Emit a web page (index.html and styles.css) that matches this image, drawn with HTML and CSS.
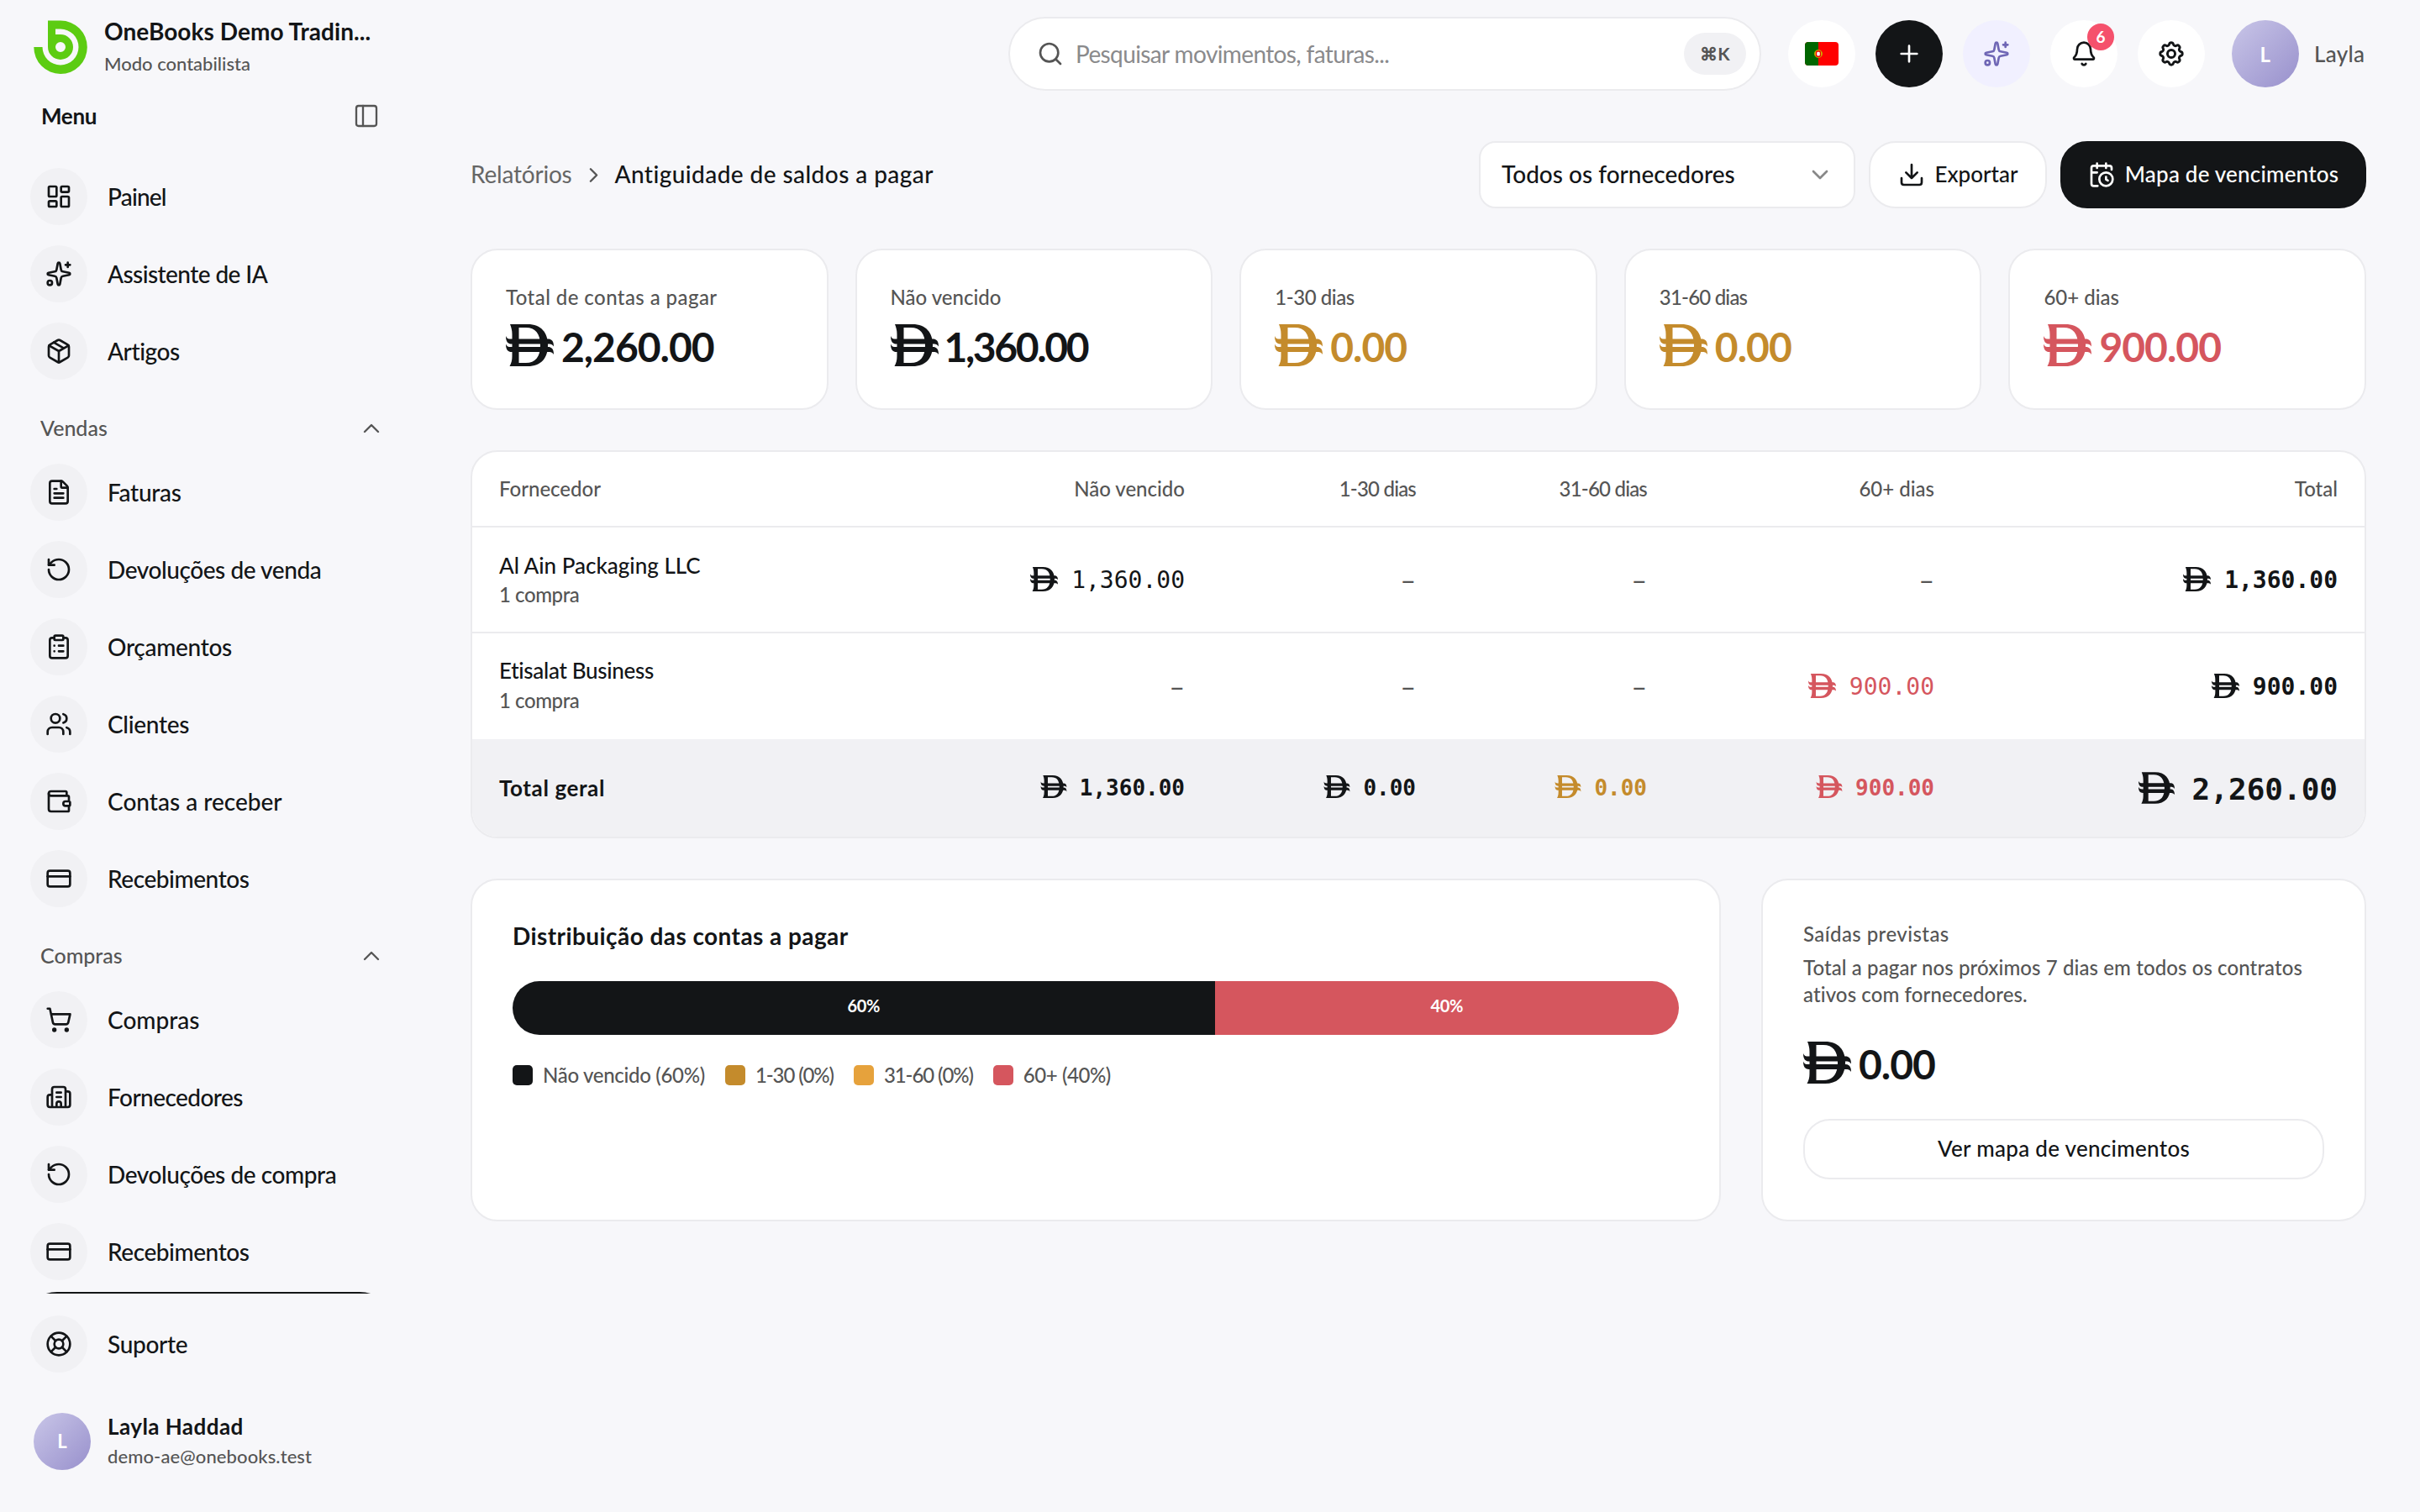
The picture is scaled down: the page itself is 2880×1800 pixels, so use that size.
FILE: index.html
```html
<!DOCTYPE html>
<html lang="pt">
<head>
<meta charset="utf-8">
<title>Antiguidade de saldos a pagar</title>
<link rel="stylesheet" href="styles.css">
</head>
<body>
<svg class="defs" aria-hidden="true">
  <symbol id="dashboard" viewBox="0 0 24 24"><rect x="3" y="3" width="7" height="9" rx="1"/><rect x="14" y="3" width="7" height="5" rx="1"/><rect x="14" y="12" width="7" height="9" rx="1"/><rect x="3" y="16" width="7" height="5" rx="1"/></symbol>
  <symbol id="sparkles" viewBox="0 0 24 24"><path d="M11.017 2.814a1 1 0 0 1 1.966 0l1.051 5.558a2 2 0 0 0 1.594 1.594l5.558 1.051a1 1 0 0 1 0 1.966l-5.558 1.051a2 2 0 0 0-1.594 1.594l-1.051 5.558a1 1 0 0 1-1.966 0l-1.051-5.558a2 2 0 0 0-1.594-1.594l-5.558-1.051a1 1 0 0 1 0-1.966l5.558-1.051a2 2 0 0 0 1.594-1.594z"/><path d="M20 2v4M22 4h-4"/><circle cx="4" cy="20" r="2"/></symbol>
  <symbol id="package" viewBox="0 0 24 24"><path d="M11 21.73a2 2 0 0 0 2 0l7-4A2 2 0 0 0 21 16V8a2 2 0 0 0-1-1.730l-7-4a2 2 0 0 0-2 0l-7 4A2 2 0 0 0 3 8v8a2 2 0 0 0 1 1.730z"/><path d="M12 22V12M3.290 7 12 12l8.710-5M7.500 4.270l9 5.150"/></symbol>
  <symbol id="file" viewBox="0 0 24 24"><path d="M6 22a2 2 0 0 1-2-2V4a2 2 0 0 1 2-2h8a2.400 2.400 0 0 1 1.704.706l3.588 3.588A2.400 2.400 0 0 1 20 8v12a2 2 0 0 1-2 2z"/><path d="M14 2v5a1 1 0 0 0 1 1h5M10 9H8M16 13H8M16 17H8"/></symbol>
  <symbol id="undo" viewBox="0 0 24 24"><path d="M3 12a9 9 0 1 0 9-9 9.750 9.750 0 0 0-6.740 2.740L3 8"/><path d="M3 3v5h5"/></symbol>
  <symbol id="clipboard" viewBox="0 0 24 24"><rect x="8" y="2" width="8" height="4" rx="1"/><path d="M16 4h2a2 2 0 0 1 2 2v14a2 2 0 0 1-2 2H6a2 2 0 0 1-2-2V6a2 2 0 0 1 2-2h2M12 11h4M12 16h4M8 11h.01M8 16h.01"/></symbol>
  <symbol id="users" viewBox="0 0 24 24"><path d="M16 21v-2a4 4 0 0 0-4-4H6a4 4 0 0 0-4 4v2M16 3.128a4 4 0 0 1 0 7.744M22 21v-2a4 4 0 0 0-3-3.870"/><circle cx="9" cy="7" r="4"/></symbol>
  <symbol id="wallet" viewBox="0 0 24 24"><path d="M19 7V4a1 1 0 0 0-1-1H5a2 2 0 0 0 0 4h15a1 1 0 0 1 1 1v4h-3a2 2 0 0 0 0 4h3a1 1 0 0 0 1-1v-2a1 1 0 0 0-1-1"/><path d="M3 5v14a2 2 0 0 0 2 2h15a1 1 0 0 0 1-1v-4"/></symbol>
  <symbol id="credit" viewBox="0 0 24 24"><rect x="2" y="5" width="20" height="14" rx="2"/><path d="M2 10h20"/></symbol>
  <symbol id="cart" viewBox="0 0 24 24"><circle cx="8" cy="21" r="1"/><circle cx="19" cy="21" r="1"/><path d="M2.050 2.050h2l2.660 12.420a2 2 0 0 0 2 1.580h9.780a2 2 0 0 0 1.950-1.570l1.650-7.430H5.120"/></symbol>
  <symbol id="building" viewBox="0 0 24 24"><path d="M10 12h4M10 8h4M14 21v-3a2 2 0 0 0-4 0v3M6 10H4a2 2 0 0 0-2 2v7a2 2 0 0 0 2 2h16a2 2 0 0 0 2-2V9a2 2 0 0 0-2-2h-2M6 21V5a2 2 0 0 1 2-2h8a2 2 0 0 1 2 2v16"/></symbol>
  <symbol id="buoy" viewBox="0 0 24 24"><circle cx="12" cy="12" r="10"/><path d="m4.930 4.930 4.240 4.240M14.830 9.170l4.240-4.240M14.830 14.830l4.240 4.240M9.170 14.830l-4.240 4.240"/><circle cx="12" cy="12" r="4"/></symbol>
  <symbol id="panel" viewBox="0 0 24 24"><rect x="3" y="3" width="18" height="18" rx="2"/><path d="M9 3v18"/></symbol>
  <symbol id="up" viewBox="0 0 24 24"><path d="m18 15-6-6-6 6"/></symbol>
  <symbol id="down" viewBox="0 0 24 24"><path d="m6 9 6 6 6-6"/></symbol>
  <symbol id="right" viewBox="0 0 24 24"><path d="m9 18 6-6-6-6"/></symbol>
  <symbol id="search" viewBox="0 0 24 24"><path d="m21 21-4.340-4.340"/><circle cx="11" cy="11" r="8"/></symbol>
  <symbol id="plus" viewBox="0 0 24 24"><path d="M5 12h14M12 5v14"/></symbol>
  <symbol id="bell" viewBox="0 0 24 24"><path d="M10.268 21a2 2 0 0 0 3.464 0M3.262 15.326A1 1 0 0 0 4 17h16a1 1 0 0 0 .74-1.673C19.410 13.956 18 12.499 18 8A6 6 0 0 0 6 8c0 4.499-1.411 5.956-2.738 7.326"/></symbol>
  <symbol id="gear" viewBox="0 0 24 24"><g transform="translate(-1.2 -1.2) scale(1.1)"><path d="M10.325 4.317c.426-1.756 2.924-1.756 3.350 0a1.724 1.724 0 0 0 2.573 1.066c1.543-.94 3.310.826 2.370 2.370a1.724 1.724 0 0 0 1.065 2.572c1.756.426 1.756 2.924 0 3.350a1.724 1.724 0 0 0-1.066 2.573c.94 1.543-.826 3.310-2.370 2.370a1.724 1.724 0 0 0-2.572 1.065c-.426 1.756-2.924 1.756-3.350 0a1.724 1.724 0 0 0-2.573-1.066c-1.543.94-3.310-.826-2.370-2.370a1.724 1.724 0 0 0-1.065-2.572c-1.756-.426-1.756-2.924 0-3.350a1.724 1.724 0 0 0 1.066-2.573c-.94-1.543.826-3.310 2.370-2.370 1 .608 2.296.07 2.572-1.065z"/><circle cx="12" cy="12" r="3.100"/></g></symbol>
  <symbol id="download" viewBox="0 0 24 24"><path d="M12 15V3M21 15v4a2 2 0 0 1-2 2H5a2 2 0 0 1-2-2v-4M7 10l5 5 5-5"/></symbol>
  <symbol id="calendar" viewBox="0 0 24 24"><path d="M16 14v2.200l1.600 1M16 2v4M21 7.500V6a2 2 0 0 0-2-2H5a2 2 0 0 0-2 2v14a2 2 0 0 0 2 2h3.500M3 10h5M8 2v4"/><circle cx="16" cy="16" r="6"/></symbol>
  <symbol id="dirham" viewBox="0 0 57 50"><path fill-rule="evenodd" d="M5 0H26C42 0 50 10 50 25S42 50 26 50H4.500C6.500 46 7.500 43 7.500 38V12C7.500 7 6.500 4 5 0ZM15.500 4V46H24C35 46 41 39 41 25S35 4 24 4Z"/><path d="M0 14C1 17 3 17.500 6 17.500H50C54.500 17.500 57 20 57 26.500C55.500 24 53.500 23.500 50 23.500H7C2.500 23.500 0 21 0 14ZM0 23.500C1 26.500 3 27 6 27H50C54.500 27 57 29.500 57 36C55.500 33.500 53.500 33 50 33H7C2.500 33 0 30.500 0 23.500Z"/></symbol>
</svg>
<div class="app">
  <aside class="sidebar">
    <div class="brand">
      <svg class="logo" viewBox="0 0 64 64"><path fill-rule="evenodd" d="M17 .5H32A31.750 31.750 0 1 1 .3 32H10.500A21.500 21.500 0 1 0 32 10.500H26V17H32A15 15 0 1 1 17 32ZM32 26a6 6 0 1 0 0 12a6 6 0 1 0 0-12Z"/></svg>
      <div class="brand-text"><div class="brand-name">OneBooks Demo Tradin...</div><div class="brand-mode">Modo contabilista</div></div>
    </div>
    <div class="menu-head"><span class="snug">Menu</span><svg class="icon thin"><use href="#panel"/></svg></div>
    <div class="scroll">
      <nav class="group">
        <a class="item"><i class="bubble"><svg class="icon"><use href="#dashboard"/></svg></i><span class="tightest">Painel</span></a>
        <a class="item"><i class="bubble"><svg class="icon"><use href="#sparkles"/></svg></i><span class="tighter">Assistente de IA</span></a>
        <a class="item"><i class="bubble"><svg class="icon"><use href="#package"/></svg></i><span class="tight">Artigos</span></a>
      </nav>
      <div class="section"><span>Vendas</span><svg class="icon thin"><use href="#up"/></svg></div>
      <nav class="group">
        <a class="item"><i class="bubble"><svg class="icon"><use href="#file"/></svg></i><span class="snug">Faturas</span></a>
        <a class="item"><i class="bubble"><svg class="icon"><use href="#undo"/></svg></i><span class="tight">Devoluções de venda</span></a>
        <a class="item"><i class="bubble"><svg class="icon"><use href="#clipboard"/></svg></i><span class="snug">Orçamentos</span></a>
        <a class="item"><i class="bubble"><svg class="icon"><use href="#users"/></svg></i><span class="snug">Clientes</span></a>
        <a class="item"><i class="bubble"><svg class="icon"><use href="#wallet"/></svg></i><span>Contas a receber</span></a>
        <a class="item"><i class="bubble"><svg class="icon"><use href="#credit"/></svg></i><span class="tight">Recebimentos</span></a>
      </nav>
      <div class="section"><span>Compras</span><svg class="icon thin"><use href="#up"/></svg></div>
      <nav class="group">
        <a class="item"><i class="bubble"><svg class="icon"><use href="#cart"/></svg></i><span>Compras</span></a>
        <a class="item"><i class="bubble"><svg class="icon"><use href="#building"/></svg></i><span class="tighter">Fornecedores</span></a>
        <a class="item"><i class="bubble"><svg class="icon"><use href="#undo"/></svg></i><span class="tight">Devoluções de compra</span></a>
        <a class="item"><i class="bubble"><svg class="icon"><use href="#credit"/></svg></i><span class="tight">Recebimentos</span></a>
        <a class="item active"></a>
      </nav>
    </div>
    <a class="item support"><i class="bubble"><svg class="icon"><use href="#buoy"/></svg></i><span class="snug">Suporte</span></a>
    <div class="user"><div class="avatar small">L</div><div><div class="user-name">Layla Haddad</div><div class="user-mail">demo-ae@onebooks.test</div></div></div>
  </aside>
  <main class="main">
    <header class="topbar">
      <div class="search"><svg class="icon"><use href="#search"/></svg><span class="placeholder">Pesquisar movimentos, faturas...</span><span class="kbd">⌘K</span></div>
      <div class="actions">
        <div class="round"><svg class="flag" viewBox="0 0 40 28"><rect width="40" height="28" fill="#f00"/><rect width="16" height="28" fill="#060"/><circle cx="16" cy="14" r="4.600" fill="#e3c400" stroke="#b8a000" stroke-width=".8"/><rect x="13.500" y="11" width="5" height="6.200" rx="2" fill="#fff" stroke="#e00" stroke-width="1.400"/></svg></div>
        <div class="round dark"><svg class="icon"><use href="#plus"/></svg></div>
        <div class="round violet"><svg class="icon"><use href="#sparkles"/></svg></div>
        <div class="round"><svg class="icon bell"><use href="#bell"/></svg><b class="badge">6</b></div>
        <div class="round"><svg class="icon"><use href="#gear"/></svg></div>
      </div>
      <div class="profile"><div class="avatar">L</div><span>Layla</span></div>
    </header>
    <div class="toolbar">
      <div class="crumbs"><span class="crumb">Relatórios</span><svg class="icon"><use href="#right"/></svg><span class="wide">Antiguidade de saldos a pagar</span></div>
      <div class="select"><span>Todos os fornecedores</span><svg class="icon"><use href="#down"/></svg></div>
      <div class="btn"><svg class="icon"><use href="#download"/></svg><span>Exportar</span></div>
      <div class="btn primary"><svg class="icon"><use href="#calendar"/></svg><span>Mapa de vencimentos</span></div>
    </div>
    <section class="stats">
      <div class="card stat"><div class="label wide">Total de contas a pagar</div><div class="amount"><svg><use href="#dirham"/></svg><span>2,260.00</span></div></div>
      <div class="card stat"><div class="label">Não vencido</div><div class="amount condensed"><svg><use href="#dirham"/></svg><span>1,360.00</span></div></div>
      <div class="card stat"><div class="label tight">1-30 dias</div><div class="amount amber"><svg><use href="#dirham"/></svg><span>0.00</span></div></div>
      <div class="card stat"><div class="label tightest">31-60 dias</div><div class="amount amber"><svg><use href="#dirham"/></svg><span>0.00</span></div></div>
      <div class="card stat"><div class="label">60+ dias</div><div class="amount red"><svg><use href="#dirham"/></svg><span>900.00</span></div></div>
    </section>
    <section class="card table">
      <div class="row head"><div>Fornecedor</div><div>Não vencido</div><div class="tightest">1-30 dias</div><div class="tightest">31-60 dias</div><div>60+ dias</div><div>Total</div></div>
      <div class="row line">
        <div><div class="vendor">Al Ain Packaging LLC</div><div class="count tight">1 compra</div></div>
        <div><p class="money"><svg><use href="#dirham"/></svg>1,360.00</p></div><div class="dash">–</div><div class="dash">–</div><div class="dash">–</div>
        <div><p class="money bold"><svg><use href="#dirham"/></svg>1,360.00</p></div>
      </div>
      <div class="row line last">
        <div><div class="vendor snug">Etisalat Business</div><div class="count tight">1 compra</div></div>
        <div class="dash">–</div><div class="dash">–</div><div class="dash">–</div><div><p class="money red"><svg><use href="#dirham"/></svg>900.00</p></div>
        <div><p class="money bold"><svg><use href="#dirham"/></svg>900.00</p></div>
      </div>
      <div class="row foot">
        <div class="wider">Total geral</div>
        <div><p class="money sum"><svg><use href="#dirham"/></svg>1,360.00</p></div>
        <div><p class="money sum"><svg><use href="#dirham"/></svg>0.00</p></div>
        <div><p class="money sum amber"><svg><use href="#dirham"/></svg>0.00</p></div>
        <div><p class="money sum red"><svg><use href="#dirham"/></svg>900.00</p></div>
        <div><p class="money grand"><svg><use href="#dirham"/></svg>2,260.00</p></div>
      </div>
    </section>
    <section class="bottom">
      <div class="card dist">
        <h2 class="wide">Distribuição das contas a pagar</h2>
        <div class="bar"><div class="seg ink" style="width:60.2%">60%</div><div class="seg rose" style="width:39.8%">40%</div></div>
        <div class="legend"><div><i class="ink"></i><span class="snug">Não vencido (60%)</span></div><div><i class="ochre"></i><span class="squeezed">1-30 (0%)</span></div><div><i class="orange"></i><span class="squeezed">31-60 (0%)</span></div><div><i class="rose"></i><span class="tight">60+ (40%)</span></div></div>
      </div>
      <div class="card out">
        <div class="out-title wide">Saídas previstas</div>
        <div class="out-text">Total a pagar nos próximos 7 dias em todos os contratos<br>ativos com fornecedores.</div>
        <div class="amount"><svg><use href="#dirham"/></svg><span>0.00</span></div>
        <div class="ghost">Ver mapa de vencimentos</div>
      </div>
    </section>
  </main>
</div>
</body>
</html>
```
FILE: styles.css
```css
* { box-sizing: border-box; margin: 0; padding: 0; }
body { width: 2880px; height: 1800px; overflow: hidden; background: #f7f7fa; color: #131517; font-family: Lato, "Noto Sans", sans-serif; font-size: 28px; font-weight: 500; font-variant-ligatures: none; white-space: nowrap; }
.defs { position: absolute; width: 0; height: 0; }
.icon { width: 32px; height: 32px; fill: none; stroke: currentColor; stroke-width: 2; stroke-linecap: round; stroke-linejoin: round; flex: none; }
.icon.thin { stroke-width: 1.75; color: #555; }
.app { display: grid; grid-template-columns: 496px 1fr; height: 1800px; }

/* Tracking */
.wider { letter-spacing: .6px; }
.wide { letter-spacing: .43px; }
.snug { letter-spacing: -.3px; }
.tight { letter-spacing: -.43px; }
.tighter { letter-spacing: -.57px; }
.tightest { letter-spacing: -.8px; }
.squeezed { letter-spacing: -1.1px; }

/* Sidebar */
.sidebar { display: flex; flex-direction: column; padding: 18px 24px 0; }
.brand { display: flex; align-items: center; gap: 20px; height: 76px; padding-left: 16px; }
.logo { width: 64px; height: 64px; fill: #5ccc12; }
.brand-text { line-height: 38px; }
.brand-name { font-size: 28px; font-weight: 700; letter-spacing: .05px; }
.brand-mode { font-size: 22px; line-height: 40px; margin-bottom: -2px; color: #555; }
.menu-head { display: flex; justify-content: space-between; align-items: center; height: 40px; margin-top: 24px; padding: 0 20px 0 25px; font-size: 26px; font-weight: 700; }
.menu-head span { padding-bottom: 1px; }
.scroll { height: 1350px; margin-top: 32px; overflow: hidden; }
.group { display: flex; flex-direction: column; gap: 4px; }
.item { display: flex; align-items: center; gap: 24px; height: 88px; padding: 0 12px; border-radius: 44px; flex: none; }
.item.active { background: #131517; }
.bubble { display: flex; align-items: center; justify-content: center; width: 68px; height: 68px; border-radius: 50%; background: #f1f1f4; }
.section { display: flex; align-items: center; justify-content: space-between; height: 80px; padding: 16px 14px 0 24px; font-size: 25px; color: #555; }
.section span { padding-bottom: 2px; }
.support { margin-top: 16px; }
.user { display: flex; align-items: center; gap: 20px; height: 72px; margin-top: 36px; padding-left: 16px; line-height: 36px; }
.user-name { font-size: 26px; font-weight: 700; letter-spacing: .45px; }
.user-mail { font-size: 22px; letter-spacing: .1px; color: #555; }
.avatar { display: flex; align-items: center; justify-content: center; width: 80px; height: 80px; border-radius: 50%; background: linear-gradient(135deg, #c9c6e8, #9890cc); color: #fff; font-size: 24px; font-weight: 700; }
.avatar.small { width: 68px; height: 68px; font-size: 22px; }

/* Top bar */
.main { padding: 0 64px; }
.topbar { display: flex; align-items: center; justify-content: flex-end; gap: 32px; height: 128px; }
.search { display: flex; align-items: center; width: 896px; height: 88px; padding: 0 16px 0 32px; border: 2px solid #ebebee; border-radius: 44px; background: #fff; color: #555; }
.placeholder { margin-left: 14px; margin-right: auto; letter-spacing: -.62px; color: #8a8a8c; font-weight: 400; }
.kbd { width: 74px; height: 50px; line-height: 49px; text-align: center; border-radius: 25px; background: #f1f1f4; font-size: 21px; font-weight: 700; }
.actions { display: flex; gap: 24px; }
.round { position: relative; display: flex; align-items: center; justify-content: center; width: 80px; height: 80px; border-radius: 50%; background: #fff; }
.round.dark { background: #131517; color: #fff; }
.round.violet { background: #f1f0ff; color: #6f66b5; }
.flag { width: 40px; height: 28px; border-radius: 4px; }
.badge { position: absolute; top: 4px; right: 4px; width: 32px; height: 32px; line-height: 32px; border-radius: 50%; background: #f5516c; color: #fff; font-size: 19px; text-align: center; }
.profile { display: flex; align-items: center; gap: 18px; width: 160px; font-size: 26px; letter-spacing: .3px; color: #555; }

/* Toolbar */
.toolbar { display: flex; gap: 16px; height: 80px; margin-top: 40px; }
.crumbs { display: flex; align-items: center; margin-right: auto; }
.crumbs span, .select span, .btn span { padding-bottom: 2px; }
.crumbs .icon { width: 29px; height: 29px; margin: 0 11px; color: #555; }
.crumb { color: #666; font-weight: 400; letter-spacing: -.2px; }
.select, .btn { display: flex; align-items: center; border: 2px solid #ebebee; background: #fff; }
.select { justify-content: space-between; width: 448px; padding: 0 24px 0 25px; border-radius: 20px; }
.select .icon { color: #888; }
.btn { justify-content: center; gap: 12px; width: 212px; border-radius: 32px; font-size: 26px; }
.btn.primary { width: 364px; border-color: #131517; background: #131517; color: #fff; letter-spacing: .2px; }

/* Cards */
.card { border: 2px solid #ebebee; border-radius: 32px; background: #fff; }
.stats { display: grid; grid-template-columns: repeat(5, 1fr); gap: 32px; margin-top: 48px; }
.stat { height: 192px; padding: 40px 40px 0; }
.label { line-height: 32px; font-size: 24px; color: #555; }
.amount { display: flex; align-items: center; gap: 9px; height: 56px; margin-top: 13px; font-size: 48px; font-weight: 700; letter-spacing: -1px; }
.amount.condensed { gap: 7px; letter-spacing: -2.4px; }
.amount span { padding-top: 2px; }
.amount svg { width: 57px; height: 50px; fill: currentColor; }
.amber { color: #c48b2c; }
.red { color: #d5565e; }

/* Table */
.table { margin-top: 48px; height: 462px; overflow: hidden; }
.row { display: grid; grid-template-columns: 500px 380px 275px 275px 342px 480px; align-items: center; text-align: right; border-bottom: 2px solid #ebebee; }
.row > div { padding-right: 32px; }
.row > div:first-child { padding: 0 0 0 32px; text-align: left; }
.head { height: 90px; padding-bottom: 2px; font-size: 24px; color: #555; }
.line { height: 126px; }
.line.last { border-color: #f1f1f4; height: 128px; }
.vendor { line-height: 34px; font-size: 26px; }
.count { line-height: 36px; margin-bottom: -2px; font-size: 24px; color: #555; }
.last .vendor { margin-top: -2px; }
.last .count { line-height: 38px; }
.dash { color: #555; font-size: 32px; }
.money { display: flex; justify-content: flex-end; align-items: center; gap: 16px; font-family: "DejaVu Sans Mono", monospace; font-weight: 400; }
.money svg { width: 33px; height: 29px; margin-bottom: 2px; fill: currentColor; }
.money.bold, .money.sum, .money.grand { font-weight: 700; }
.money.sum { gap: 15px; font-size: 26px; }
.money.sum svg { width: 32px; height: 27px; }
.money.grand { padding-top: 3px; font-size: 36px; gap: 21px; }
.money.grand svg { width: 43px; height: 38px; }
.foot { height: 118px; padding-bottom: 7px; border: 0; background: #f1f1f4; font-size: 26px; font-weight: 700; }

/* Bottom cards */
.bottom { display: grid; grid-template-columns: 1488px 720px; gap: 48px; margin-top: 48px; }
.bottom .card { height: 408px; padding: 48px; }
.dist h2 { line-height: 36px; font-size: 28px; font-weight: 700; }
.bar { display: flex; height: 64px; margin-top: 36px; border-radius: 32px; overflow: hidden; }
.seg { display: flex; justify-content: center; line-height: 58px; color: #fff; font-size: 20px; font-weight: 700; letter-spacing: -.4px; }
.ink { background: #131517; }
.rose { background: #d5565e; }
.ochre { background: #c48b2c; }
.orange { background: #e6a23c; }
.legend { display: flex; gap: 24px; margin-top: 32px; line-height: 32px; font-size: 24px; color: #555; }
.legend div { display: flex; align-items: center; gap: 12px; }
.legend i { width: 24px; height: 24px; border-radius: 5px; }
.out-title { line-height: 32px; font-size: 24px; color: #555; }
.out-text { margin-top: 8px; line-height: 32px; font-size: 24px; letter-spacing: .1px; color: #555; }
.out .amount { margin-top: 37px; }
.ghost { height: 72px; line-height: 67px; margin-top: 39px; border: 2px solid #ebebee; border-radius: 32px; text-align: center; font-size: 26px; letter-spacing: .3px; }
```
